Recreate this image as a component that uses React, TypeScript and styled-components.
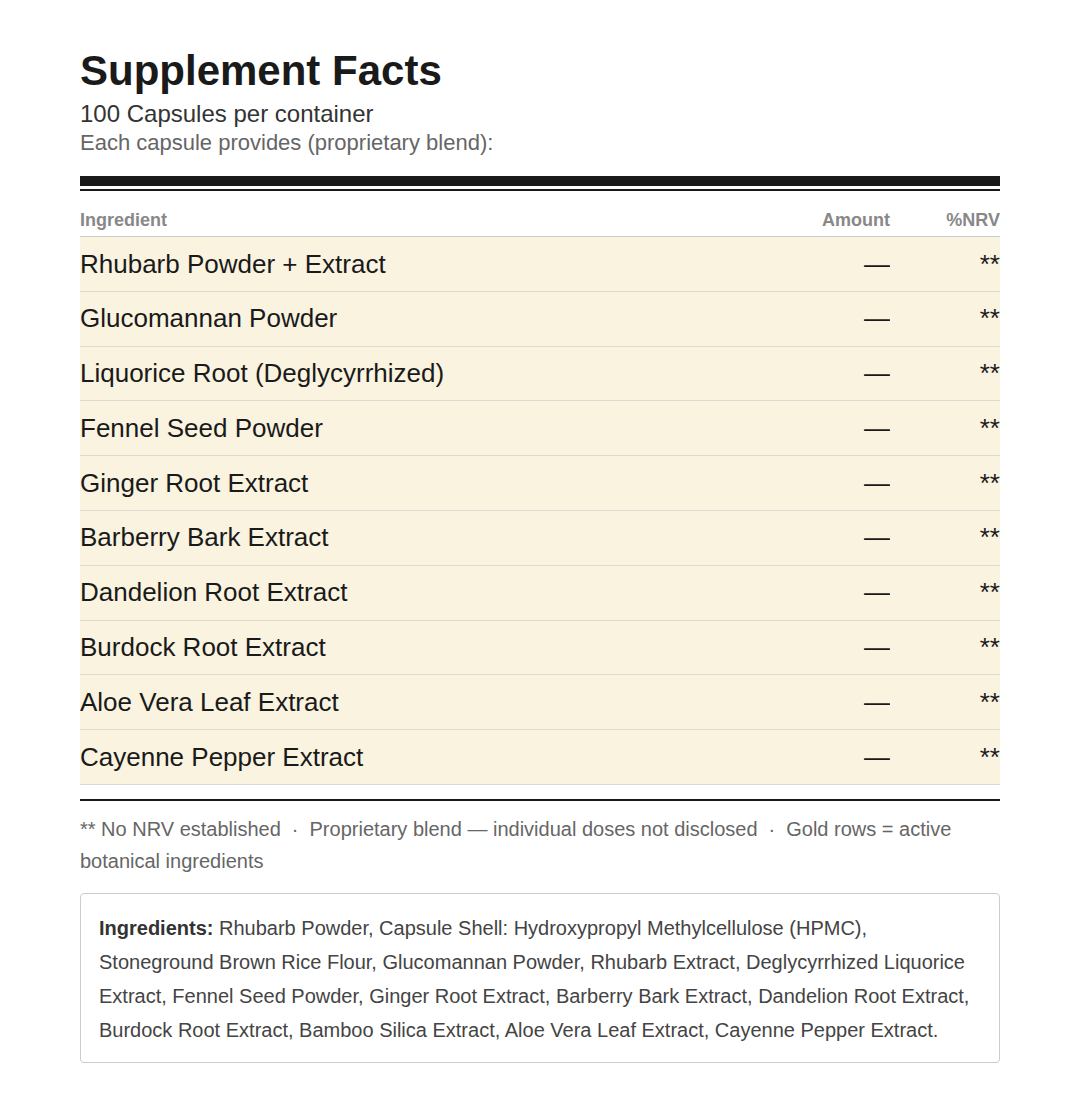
import React from 'react';
import styled, { createGlobalStyle } from 'styled-components';

const GlobalStyle = createGlobalStyle`
  body {
    margin: 0;
    background: #ffffff;
    font-family: "Liberation Sans", Arial, sans-serif;
  }
`;

const Page = styled.div`
  padding: 46px 80px 48px;
`;

const Title = styled.h1`
  margin: 0;
  font-size: 42px;
  font-weight: 700;
  color: #1a1a1a;
  line-height: 50px;
`;

const Servings = styled.div`
  margin-top: 4px;
  font-size: 24px;
  color: #333;
  line-height: 28px;
`;

const Provides = styled.div`
  margin-top: 3px;
  font-size: 22px;
  color: #666;
  line-height: 24px;
`;

const HeavyRule = styled.div`
  margin-top: 21px;
  height: 3px;
  border-top: 10px solid #1a1a1a;
  border-bottom: 2px solid #1a1a1a;
`;

const Table = styled.div`
  display: grid;
  grid-template-columns: 1fr 120px 110px;
`;

const HeadCell = styled.div<{ $align?: 'left' | 'right' }>`
  padding: 19px 0 5px;
  font-size: 18px;
  font-weight: 700;
  color: #888;
  text-align: ${(p) => p.$align || 'left'};
  border-bottom: 1px solid #ccc;
  line-height: 21px;
`;

const Cell = styled.div<{ $align?: 'left' | 'right' }>`
  padding: 12.5px 0;
  background: #f9f3e0;
  border-bottom: 1px solid #dcd9d0;
  font-size: 26px;
  line-height: 28.8px;
  color: #1a1a1a;
  text-align: ${(p) => p.$align || 'left'};
`;

const ThinRule = styled.div`
  margin-top: 14px;
  border-top: 2px solid #1a1a1a;
`;

const Footnote = styled.p`
  margin: 12px 0 0;
  font-size: 20px;
  line-height: 32px;
  color: #666;
`;

const Sep = styled.span`
  margin: 0 11px;
`;

const IngredientBox = styled.div`
  margin-top: 16px;
  padding: 17px 18px 15px;
  border: 1px solid #ccc;
  border-radius: 4px;
  font-size: 20px;
  line-height: 34px;
  color: #444;
`;

const Strong = styled.strong`
  font-weight: 700;
  color: #333;
`;

const ingredients = [
  'Rhubarb Powder + Extract',
  'Glucomannan Powder',
  'Liquorice Root (Deglycyrrhized)',
  'Fennel Seed Powder',
  'Ginger Root Extract',
  'Barberry Bark Extract',
  'Dandelion Root Extract',
  'Burdock Root Extract',
  'Aloe Vera Leaf Extract',
  'Cayenne Pepper Extract',
];

export default function App() {
  return (
    <Page>
      <GlobalStyle />
      <Title>Supplement Facts</Title>
      <Servings>100 Capsules per container</Servings>
      <Provides>Each capsule provides (proprietary blend):</Provides>
      <HeavyRule />

      <Table>
        <HeadCell>Ingredient</HeadCell>
        <HeadCell $align="right">Amount</HeadCell>
        <HeadCell $align="right">%NRV</HeadCell>
        {ingredients.map((name) => (
          <React.Fragment key={name}>
            <Cell>{name}</Cell>
            <Cell $align="right">—</Cell>
            <Cell $align="right">**</Cell>
          </React.Fragment>
        ))}
      </Table>

      <ThinRule />
      <Footnote>
        ** No NRV established<Sep>·</Sep>Proprietary blend — individual doses not disclosed
        <Sep>·</Sep>Gold rows = active botanical ingredients
      </Footnote>

      <IngredientBox>
        <Strong>Ingredients:</Strong> Rhubarb Powder, Capsule Shell: Hydroxypropyl Methylcellulose
        (HPMC), Stoneground Brown Rice Flour, Glucomannan Powder, Rhubarb Extract, Deglycyrrhized
        Liquorice Extract, Fennel Seed Powder, Ginger Root Extract, Barberry Bark Extract, Dandelion
        Root Extract, Burdock Root Extract, Bamboo Silica Extract, Aloe Vera Leaf Extract, Cayenne
        Pepper Extract.
      </IngredientBox>
    </Page>
  );
}
